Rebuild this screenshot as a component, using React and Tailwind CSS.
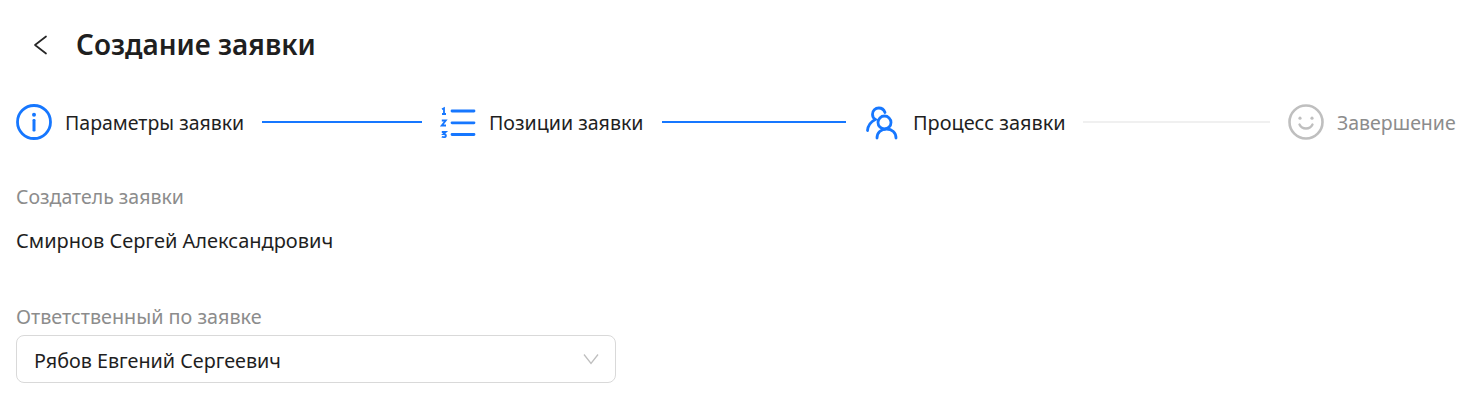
import React from "react";

function InfoIcon() {
  return (
    <svg width="36" height="36" viewBox="0 0 36 36" fill="none" className="shrink-0">
      <circle cx="18" cy="18" r="16.500" stroke="#1677ff" strokeWidth="2.800" />
      <circle cx="18" cy="10.800" r="2" fill="#1677ff" />
      <rect x="16.500" y="15" width="3" height="12.500" rx="1.200" fill="#1677ff" />
    </svg>
  );
}

function ListIcon() {
  return (
    <svg width="36" height="36" viewBox="0 0 36 36" fill="none" className="shrink-0">
      <path d="M12 7h22M12 18.800h22M12 30.500h22" stroke="#1677ff" strokeWidth="2.800" strokeLinecap="round" />
      <path d="M2 5.200 4 4.200V10M2 10H6" stroke="#1677ff" strokeWidth="1.800" />
      <path d="M1.800 16.500h4L1.800 21.500h4.200" stroke="#1677ff" strokeWidth="1.800" />
      <path d="M1.800 28h4L3.400 30.200c1.700 0 2.500.6 2.500 1.500 0 1-.9 1.500-2.100 1.500-.7 0-1.400-.1-2-.4" stroke="#1677ff" strokeWidth="1.800" />
    </svg>
  );
}

function UsersIcon() {
  return (
    <svg width="36" height="36" viewBox="0 0 36 36" fill="none" className="shrink-0">
      <circle cx="20.500" cy="18.500" r="6.500" stroke="#1677ff" strokeWidth="2.800" />
      <path d="M13 34c0-5.500 4-9 9.500-9s9.500 3.500 9.500 9" stroke="#1677ff" strokeWidth="2.800" strokeLinecap="round" />
      <path d="M21 8.500C20 5.800 17.500 4 14.800 4c-3.500 0-6.300 2.800-6.300 6.200 0 2.200 1 4 2.800 5.200C7 17.500 4 21.500 3.500 26.500" stroke="#1677ff" strokeWidth="2.800" strokeLinecap="round" />
    </svg>
  );
}

function SmileIcon() {
  return (
    <svg width="36" height="36" viewBox="0 0 36 36" fill="none" className="shrink-0">
      <circle cx="18" cy="18" r="16.500" stroke="#bfbfbf" strokeWidth="2.600" />
      <circle cx="12" cy="14.200" r="1.600" fill="#bfbfbf" />
      <circle cx="24" cy="14.200" r="1.600" fill="#bfbfbf" />
      <path d="M11.500 20.500c1.300 2.700 3.700 4 6.500 4s5.200-1.300 6.500-4" stroke="#bfbfbf" strokeWidth="2.400" strokeLinecap="round" />
    </svg>
  );
}

function Step({ icon, label, gray, width, size }) {
  return (
    <div className="flex items-center shrink-0 gap-[13px]">
      {icon}
      <span className={`${width} ${size} pt-[2px] leading-[24px] whitespace-nowrap ${gray ? "text-[#8c8c8c]" : "text-[#1f1f1f]"}`}>
        {label}
      </span>
    </div>
  );
}

export default function App() {
  return (
    <div className="w-[1471px] h-[408px] bg-white overflow-hidden px-4 font-['Noto_Sans','Open_Sans',sans-serif]">
      <div className="flex items-center h-[28px] mt-[31px] pl-[17px] gap-[28px]">
        <svg width="15" height="20" viewBox="0 0 15 20" fill="none" className="shrink-0">
          <path d="M13 1.500 2 10l11 8.500" stroke="#262626" strokeWidth="1.700" strokeLinecap="round" strokeLinejoin="round" />
        </svg>
        <h1 className="text-[27.900px] leading-[28px] pb-[2px] font-semibold text-[#1f1f1f] whitespace-nowrap">Создание заявки</h1>
      </div>

      <div className="flex items-center h-[36px] mt-[45px] w-[1440px]">
        <Step icon={<InfoIcon />} label="Параметры заявки" width="w-[179px]" size="text-[19.500px]" />
        <div className="h-[2px] w-[160px] mx-[18px] bg-[#1677ff] shrink-0" />
        <Step icon={<ListIcon />} label="Позиции заявки" width="w-[155px]" size="text-[19.600px]" />
        <div className="h-[2px] w-[184px] mx-[18px] bg-[#1677ff] shrink-0" />
        <Step icon={<UsersIcon />} label="Процесс заявки" width="w-[152px]" size="text-[19.900px]" />
        <div className="h-[2px] w-[187px] mx-[18px] bg-[#f0f0f0] shrink-0" />
        <Step icon={<SmileIcon />} label="Завершение" gray width="w-[119px]" size="text-[19.500px]" />
      </div>

      <div className="mt-[45px] text-[19.500px] leading-[24px] text-[#8c8c8c]">Создатель заявки</div>
      <div className="mt-[20px] text-[20px] leading-[24px] text-[#1f1f1f]">Смирнов Сергей Александрович</div>

      <div className="mt-[52px] text-[19.750px] leading-[24px] text-[#8c8c8c]">Ответственный по заявке</div>
      <div className="mt-[6px] w-[600px] h-[48px] border border-[#d9d9d9] rounded-[8px] flex items-center justify-between pl-[17px] pr-[16px]">
        <span className="text-[19.750px] leading-[24px] pt-[3px] text-[#1f1f1f]">Рябов Евгений Сергеевич</span>
        <svg width="16" height="12" viewBox="0 0 16 12" fill="none">
          <path d="M1 1.500 8 10.500l7-9" stroke="#bfbfbf" strokeWidth="1.300" />
        </svg>
      </div>
    </div>
  );
}
